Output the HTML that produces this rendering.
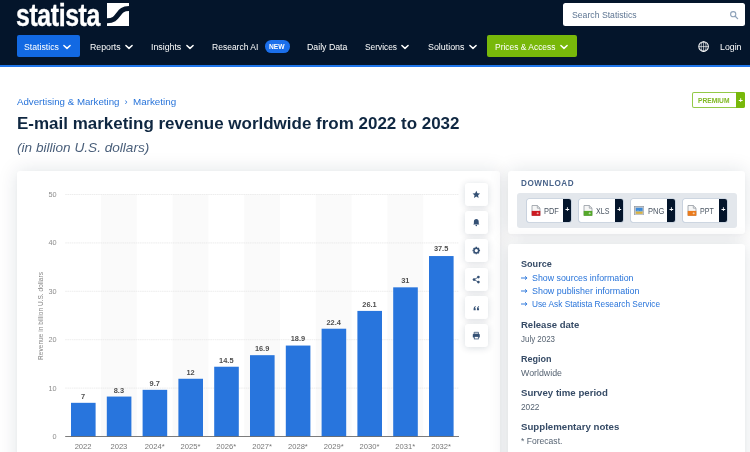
<!DOCTYPE html><html lang="en"><head><meta charset="utf-8"><title>E-mail marketing revenue worldwide 2022-2032 | Statista</title>
<style>html,body{margin:0;padding:0}body{width:750px;height:452px;overflow:hidden;position:relative;background:#fff;font-family:"Liberation Sans", sans-serif;-webkit-font-smoothing:antialiased}
.t{position:absolute;display:block;white-space:nowrap;line-height:20px;margin:0;padding:0;font-weight:400;font-style:normal;text-decoration:none}.a{position:absolute}.card{position:absolute;background:#fff;border-radius:3px;box-shadow:0 0 20px rgba(15,39,65,.125),0 1px 4px rgba(15,39,65,.03)}.tb{position:absolute;left:465.4px;width:23px;height:23px;background:#fff;border-radius:3px;box-shadow:0 1px 7px rgba(15,39,65,.16)}.tb svg{position:absolute;left:0;top:0}.db{position:absolute;top:199.3px;width:44.2px;height:22.4px;background:#fff;border-radius:2px;overflow:hidden;box-shadow:0 0 0 .6px #b7c5d6}.db i{position:absolute;right:0;top:0;bottom:0;width:8px;background:#04152b}</style></head><body>
<div class="a" style="left:0;top:0;width:750px;height:452px;overflow:hidden;will-change:transform">
<div class="a" style="left:0;top:0;width:750px;height:65px;background:#04152b"></div>
<div class="a" style="left:0;top:64.8px;width:750px;height:2.7px;background:#2076ea"></div>
<div class="t" id="logo" style="left:15.6px;top:3.8px;font-size:31.3px;line-height:24px;font-weight:700;color:#fff;-webkit-text-stroke:.35px #fff;transform-origin:0 50%;transform:scaleX(.795);letter-spacing:-.5px">statista</div>
<svg class="a" style="left:107px;top:3px;width:22.4px;height:23px" viewBox="0 0 22.4 23"><rect width="22.4" height="23" fill="#fff"/><path d="M-.5 17.7 C7 17.7 8.6 15.1 11.2 11.6 C13.8 8.1 15.4 5.5 23 5.5" fill="none" stroke="#04152b" stroke-width="5"/></svg>

<div class="a" style="left:16.5px;top:35.4px;width:63.3px;height:21.7px;border-radius:2px;background:#1269e3"></div>
<div class="a" style="left:487px;top:35.2px;width:89.6px;height:21.9px;border-radius:2px;background:#78b80a"></div>
<div class="a" style="left:264.7px;top:40.2px;width:24.9px;height:12.5px;border-radius:6.3px;background:#1b6feb"></div>
<svg class="a" style="left:62.3px;top:43px;width:10px;height:8px" viewBox="0 0 10 8"><path d="M1.9 2.5 L5 5.4 L8.1 2.5" fill="none" stroke="#fff" stroke-width="1.5" stroke-linecap="round" stroke-linejoin="round"/></svg>
<svg class="a" style="left:124.2px;top:43px;width:10px;height:8px" viewBox="0 0 10 8"><path d="M1.9 2.5 L5 5.4 L8.1 2.5" fill="none" stroke="#fff" stroke-width="1.5" stroke-linecap="round" stroke-linejoin="round"/></svg>
<svg class="a" style="left:185.0px;top:43px;width:10px;height:8px" viewBox="0 0 10 8"><path d="M1.9 2.5 L5 5.4 L8.1 2.5" fill="none" stroke="#fff" stroke-width="1.5" stroke-linecap="round" stroke-linejoin="round"/></svg>
<svg class="a" style="left:400.0px;top:43px;width:10px;height:8px" viewBox="0 0 10 8"><path d="M1.9 2.5 L5 5.4 L8.1 2.5" fill="none" stroke="#fff" stroke-width="1.5" stroke-linecap="round" stroke-linejoin="round"/></svg>
<svg class="a" style="left:467.5px;top:43px;width:10px;height:8px" viewBox="0 0 10 8"><path d="M1.9 2.5 L5 5.4 L8.1 2.5" fill="none" stroke="#fff" stroke-width="1.5" stroke-linecap="round" stroke-linejoin="round"/></svg>
<svg class="a" style="left:559.0px;top:43px;width:10px;height:8px" viewBox="0 0 10 8"><path d="M1.9 2.5 L5 5.4 L8.1 2.5" fill="none" stroke="#fff" stroke-width="1.5" stroke-linecap="round" stroke-linejoin="round"/></svg>
<div class="a" style="left:562.9px;top:2.7px;width:182.6px;height:23.8px;border-radius:2.5px;background:#fff"></div>
<svg class="a" style="left:729px;top:9.5px;width:10px;height:10px" viewBox="0 0 10 10"><circle cx="4.2" cy="4.2" r="2.6" fill="none" stroke="#8ea2b9" stroke-width="1.1"/><path d="M6.2 6.2 L8.6 8.6" stroke="#8ea2b9" stroke-width="1.3" stroke-linecap="round"/></svg>
<svg class="a" style="left:697.9px;top:40.8px;width:11.2px;height:11.2px" viewBox="0 0 11 11"><g fill="none" stroke="#fff"><circle cx="5.5" cy="5.5" r="4.700" stroke-width="1.05"/><ellipse cx="5.5" cy="5.5" rx="2.400" ry="4.700" stroke-width=".65"/><path d="M.8 5.500H10.200M5.500 .8V10.200" stroke-width=".65"/></g></svg>
<div class="a" style="left:692.2px;top:92.4px;width:53.2px;height:15.5px;border-radius:2px;background:#fff;box-shadow:inset 0 0 0 1px #93c947"></div>
<div class="a" style="left:736.2px;top:92.4px;width:9.2px;height:15.5px;border-radius:0 2px 2px 0;background:#78b80a"></div>
<div class="t" style="left:738.4px;top:90.9px;font-size:7.5px;font-weight:700;color:#fff">+</div>
<div class="card" style="left:16.5px;top:170.6px;width:483.4px;height:300px"></div>
<div class="card" style="left:508.3px;top:170.6px;width:236.7px;height:63.4px"></div>
<div class="card" style="left:508.3px;top:244px;width:236.7px;height:230px"></div>
<div class="a" style="left:517.3px;top:192.7px;width:219.4px;height:35.3px;border-radius:3px;background:#e3e7ec"></div>
<div class="db" style="left:526.7px"><i></i></div>
<div class="t" style="left:565.2px;top:199.6px;font-size:7.2px;font-weight:700;color:#fff">+</div>
<svg class="a" style="left:530.5px;top:205px;width:10px;height:11px" viewBox="0 0 10 11"><path d="M1 .5H6.300L9 3.200V10.500H1Z" fill="#f6f6f6" stroke="#8f969e" stroke-width=".75"/><path d="M6.300 .5V3.200H9" fill="none" stroke="#8f969e" stroke-width=".7"/><rect x=".7" y="5.900" width="8.600" height="4.900" fill="#cc1a21"/><path d="M5.600 8.300h2.200M6.700 7.300v2" stroke="#fff" stroke-width=".6" opacity=".85"/></svg>
<div class="db" style="left:578.7px"><i></i></div>
<div class="t" style="left:617.2px;top:199.6px;font-size:7.2px;font-weight:700;color:#fff">+</div>
<svg class="a" style="left:582.5px;top:205px;width:10px;height:11px" viewBox="0 0 10 11"><path d="M1 .5H6.300L9 3.200V10.500H1Z" fill="#f6f6f6" stroke="#8f969e" stroke-width=".75"/><path d="M6.300 .5V3.200H9" fill="none" stroke="#8f969e" stroke-width=".7"/><rect x=".7" y="5.900" width="8.600" height="4.900" fill="#55a82a"/><path d="M5.600 8.300h2.200M6.700 7.300v2" stroke="#fff" stroke-width=".6" opacity=".85"/></svg>
<div class="db" style="left:630.7px"><i></i></div>
<div class="t" style="left:669.2px;top:199.6px;font-size:7.2px;font-weight:700;color:#fff">+</div>
<svg class="a" style="left:634.1px;top:205.6px;width:10.4px;height:9.6px" viewBox="0 0 10.4 9.6"><rect x=".4" y=".4" width="9.600" height="8.800" fill="#c9cdd2" stroke="#8f969e" stroke-width=".7"/><rect x="1.800" y="1.800" width="6.800" height="3.400" fill="#3f8bd8"/><rect x="1.800" y="5.200" width="6.800" height="2.600" fill="#d9b13f"/><path d="M1.800 5.600 L4 4.200 L5.600 5.200 L7 4.600 L8.600 5.600Z" fill="#7fb6e8"/></svg>
<div class="db" style="left:682.7px"><i></i></div>
<div class="t" style="left:721.2px;top:199.6px;font-size:7.2px;font-weight:700;color:#fff">+</div>
<svg class="a" style="left:686.5px;top:205px;width:10px;height:11px" viewBox="0 0 10 11"><path d="M1 .5H6.300L9 3.200V10.500H1Z" fill="#f6f6f6" stroke="#8f969e" stroke-width=".75"/><path d="M6.300 .5V3.200H9" fill="none" stroke="#8f969e" stroke-width=".7"/><rect x=".7" y="5.900" width="8.600" height="4.900" fill="#ea7b1c"/><path d="M5.600 8.300h2.200M6.700 7.300v2" stroke="#fff" stroke-width=".6" opacity=".85"/></svg>
<svg class="a" style="left:520.6px;top:274.5px;width:7px;height:6px" viewBox="0 0 7 6"><path d="M.4 3H5.700M4.300 1.600L5.900 3L4.300 4.400" fill="none" stroke="#2874da" stroke-width=".95" stroke-linecap="round" stroke-linejoin="round"/></svg>
<svg class="a" style="left:520.6px;top:287.8px;width:7px;height:6px" viewBox="0 0 7 6"><path d="M.4 3H5.700M4.300 1.600L5.900 3L4.300 4.400" fill="none" stroke="#2874da" stroke-width=".95" stroke-linecap="round" stroke-linejoin="round"/></svg>
<svg class="a" style="left:520.6px;top:301.2px;width:7px;height:6px" viewBox="0 0 7 6"><path d="M.4 3H5.700M4.300 1.600L5.900 3L4.300 4.400" fill="none" stroke="#2874da" stroke-width=".95" stroke-linecap="round" stroke-linejoin="round"/></svg>
<svg class="a" style="left:0;top:170px;width:500px;height:282px" viewBox="0 170 500 282">
<rect x="101.00" y="194.5" width="35.80" height="242.00" fill="#fafafa"/>
<rect x="172.60" y="194.5" width="35.80" height="242.00" fill="#fafafa"/>
<rect x="244.20" y="194.5" width="35.80" height="242.00" fill="#fafafa"/>
<rect x="315.80" y="194.5" width="35.80" height="242.00" fill="#fafafa"/>
<rect x="387.40" y="194.5" width="35.80" height="242.00" fill="#fafafa"/>
<path d="M65.2 194.50H459.0" stroke="#e8e8e8" stroke-width=".8" stroke-dasharray="1.6 .6"/>
<path d="M65.2 242.90H459.0" stroke="#e8e8e8" stroke-width=".8" stroke-dasharray="1.6 .6"/>
<path d="M65.2 291.30H459.0" stroke="#e8e8e8" stroke-width=".8" stroke-dasharray="1.6 .6"/>
<path d="M65.2 339.70H459.0" stroke="#e8e8e8" stroke-width=".8" stroke-dasharray="1.6 .6"/>
<path d="M65.2 388.10H459.0" stroke="#e8e8e8" stroke-width=".8" stroke-dasharray="1.6 .6"/>
<rect x="71.00" y="402.82" width="24.6" height="33.68" fill="#2875dd"/>
<rect x="106.80" y="396.56" width="24.6" height="39.94" fill="#2875dd"/>
<rect x="142.60" y="389.82" width="24.6" height="46.68" fill="#2875dd"/>
<rect x="178.40" y="378.76" width="24.6" height="57.74" fill="#2875dd"/>
<rect x="214.20" y="366.73" width="24.6" height="69.77" fill="#2875dd"/>
<rect x="250.00" y="355.18" width="24.6" height="81.32" fill="#2875dd"/>
<rect x="285.80" y="345.55" width="24.6" height="90.95" fill="#2875dd"/>
<rect x="321.60" y="328.71" width="24.6" height="107.79" fill="#2875dd"/>
<rect x="357.40" y="310.91" width="24.6" height="125.59" fill="#2875dd"/>
<rect x="393.20" y="287.33" width="24.6" height="149.17" fill="#2875dd"/>
<rect x="429.00" y="256.05" width="24.6" height="180.45" fill="#2875dd"/>
<path d="M65.2 436.50H459.0" stroke="#5a5a5a" stroke-width=".8"/>
</svg>
<div class="t" id="ylab" style="left:40.7px;top:315.9px;font-size:6.55px;color:#858585;transform:translate(-50%,-50%) rotate(-90deg);letter-spacing:.02px">Revenue in billion U.S. dollars</div>
<div class="tb" style="top:182.8px"><svg width="23" height="23" viewBox="0 0 23 23"><g transform="translate(11.3 11.6) scale(.78) translate(-11.5 -11.5)"><path d='M11.5 6.6l1.45 3.1 3.35.4-2.5 2.3.65 3.3-2.95-1.65-2.95 1.65.65-3.3-2.5-2.3 3.35-.4z' fill='#345074'/></g></svg></div>
<div class="tb" style="top:211.1px"><svg width="23" height="23" viewBox="0 0 23 23"><g transform="translate(11.3 11.6) scale(.78) translate(-11.5 -11.5)"><path d='M11.5 6.900c-1.900 0-3.100 1.400-3.100 3.400v2.400l-.8 1.200h7.800l-.8-1.200v-2.400c0-2-1.200-3.400-3.100-3.400z' fill='#345074'/><circle cx='11.500' cy='15.200' r='1' fill='#345074'/></g></svg></div>
<div class="tb" style="top:239.4px"><svg width="23" height="23" viewBox="0 0 23 23"><g transform="translate(11.3 11.6) scale(.78) translate(-11.5 -11.5)"><circle cx='11.5' cy='11.5' r='3.05' fill='none' stroke='#345074' stroke-width='1.9'/><g stroke='#345074' stroke-width='1.9'><path d='M11.5 6.7v1.4M11.5 14.9v1.4M6.7 11.5h1.400M14.900 11.500h1.400M8.100 8.100l1 1M13.900 13.900l1 1M14.900 8.100l-1 1M9.100 13.900l-1 1'/></g></g></svg></div>
<div class="tb" style="top:267.7px"><svg width="23" height="23" viewBox="0 0 23 23"><g transform="translate(11.3 11.6) scale(.78) translate(-11.5 -11.5)"><g fill='#345074'><circle cx='8.600' cy='11.500' r='1.700'/><circle cx='14.2' cy='8.3' r='1.700'/><circle cx='14.2' cy='14.7' r='1.700'/></g><path d='M14.2 8.3L8.6 11.5l5.600 3.200' fill='none' stroke='#345074' stroke-width='1'/></g></svg></div>
<div class="tb" style="top:296.0px"><svg width="23" height="23" viewBox="0 0 23 23"><g transform="translate(11.3 11.6) scale(.78) translate(-11.5 -11.5)"><path d='M8 13.800c0-2.300.9-3.700 2.700-4.300v1.300c-.7.300-1.100.9-1.100 1.500h1.100v2.700H8zM12.300 13.800c0-2.300.9-3.700 2.700-4.300v1.300c-.7.300-1.100.9-1.100 1.500H15v2.700h-2.700z' fill='#345074'/></g></svg></div>
<div class="tb" style="top:324.3px"><svg width="23" height="23" viewBox="0 0 23 23"><g transform="translate(11.3 11.6) scale(.78) translate(-11.5 -11.5)"><path d='M8.700 7.300h5.600v2.200H8.700z' fill='none' stroke='#345074' stroke-width='1'/><rect x='7' y='9.600' width='9' height='4.400' rx='.8' fill='#345074'/><rect x='8.900' y='12.600' width='5.200' height='3.200' fill='#fff' stroke='#345074' stroke-width='1'/></g></svg></div>
<a class="t" id="n1" style="top:36.84px;font-size:9.70px;color:#fff;left:23.90px;transform-origin:0 13.36px;transform:scale(0.9003,1.000);">Statistics</a>
<a class="t" id="n2" style="top:36.84px;font-size:9.70px;color:#fff;left:89.50px;transform-origin:0 13.36px;transform:scale(0.9021,1.000);">Reports</a>
<a class="t" id="n3" style="top:36.84px;font-size:9.70px;color:#fff;left:150.80px;transform-origin:0 13.36px;transform:scale(0.9044,1.000);">Insights</a>
<a class="t" id="n4" style="top:36.84px;font-size:9.70px;color:#fff;left:212.00px;transform-origin:0 13.36px;transform:scale(0.8791,1.000);">Research AI</a>
<span class="t" id="n5" style="top:37.08px;font-size:6.70px;color:#fff;font-weight:700;left:269.40px;transform-origin:0 12.32px;transform:scale(0.9994,1.000);">NEW</span>
<a class="t" id="n6" style="top:36.84px;font-size:9.70px;color:#fff;left:306.80px;transform-origin:0 13.36px;transform:scale(0.9041,1.000);">Daily Data</a>
<a class="t" id="n7" style="top:36.84px;font-size:9.70px;color:#fff;left:364.80px;transform-origin:0 13.36px;transform:scale(0.8612,1.000);">Services</a>
<a class="t" id="n8" style="top:36.84px;font-size:9.70px;color:#fff;left:427.50px;transform-origin:0 13.36px;transform:scale(0.9157,1.000);">Solutions</a>
<a class="t" id="n9" style="top:36.84px;font-size:9.70px;color:#fff;left:495.00px;transform-origin:0 13.36px;transform:scale(0.8711,1.000);">Prices &amp; Access</a>
<a class="t" id="n10" style="top:36.84px;font-size:9.70px;color:#fff;left:720.00px;transform-origin:0 13.36px;transform:scale(0.9065,1.000);">Login</a>
<label class="t" id="srch" style="top:4.68px;font-size:9.30px;color:#5d7592;left:572.40px;transform-origin:0 13.22px;transform:scale(0.9329,1.000);">Search Statistics</label>
<span class="t" id="prem" style="top:90.78px;font-size:6.40px;color:#80b924;font-weight:700;left:697.50px;transform-origin:0 12.22px;transform:scale(1.0435,1.000);">PREMIUM</span>
<a class="t" id="bc1" style="top:92.02px;font-size:9.75px;color:#2874da;left:17.00px;transform-origin:0 13.38px;transform:scale(0.9954,1.000);">Advertising &amp; Marketing</a>
<span class="t" id="bc2" style="top:92.21px;font-size:9.20px;color:#2874da;left:124.50px;">›</span>
<a class="t" id="bc3" style="top:92.02px;font-size:9.75px;color:#2874da;left:132.60px;transform-origin:0 13.38px;transform:scale(1.0091,1.000);">Marketing</a>
<h1 class="t" id="title" style="top:113.18px;font-size:16.50px;color:#0f2741;font-weight:700;left:17.00px;transform-origin:0 15.72px;transform:scale(1.0289,1.000);">E-mail marketing revenue worldwide from 2022 to 2032</h1>
<h2 class="t" id="sub" style="top:137.83px;font-size:13.20px;color:#4a5f7a;font-style:italic;left:16.90px;transform-origin:0 14.57px;transform:scale(1.0315,1.000);">(in billion U.S. dollars)</h2>
<h3 class="t" id="dl" style="top:173.19px;font-size:8.40px;color:#48638a;font-weight:700;left:520.70px;transform-origin:0 12.91px;transform:scale(0.9734,1.000);letter-spacing:.55px;">DOWNLOAD</h3>
<span class="t" id="d0" style="top:200.78px;font-size:9.30px;color:#4a5562;left:544.10px;transform-origin:0 13.22px;transform:scale(0.8007,1.000);">PDF</span>
<span class="t" id="d1" style="top:200.78px;font-size:9.30px;color:#4a5562;left:596.10px;transform-origin:0 13.22px;transform:scale(0.7623,1.000);">XLS</span>
<span class="t" id="d2" style="top:200.78px;font-size:9.30px;color:#4a5562;left:648.10px;transform-origin:0 13.22px;transform:scale(0.8136,1.000);">PNG</span>
<span class="t" id="d3" style="top:200.78px;font-size:9.30px;color:#4a5562;left:700.10px;transform-origin:0 13.22px;transform:scale(0.7627,1.000);">PPT</span>
<h4 class="t" id="s0" style="top:253.77px;font-size:9.60px;color:#364b66;font-weight:700;left:520.70px;transform-origin:0 13.33px;transform:scale(0.9468,1.000);">Source</h4>
<a class="t" id="s1" style="top:267.88px;font-size:9.00px;color:#2874da;left:532.00px;transform-origin:0 13.12px;transform:scale(0.9801,1.000);">Show sources information</a>
<a class="t" id="s2" style="top:280.68px;font-size:9.00px;color:#2874da;left:532.00px;transform-origin:0 13.12px;transform:scale(0.9902,1.000);">Show publisher information</a>
<a class="t" id="s3" style="top:293.98px;font-size:9.00px;color:#2874da;left:532.00px;transform-origin:0 13.12px;transform:scale(0.9204,1.000);">Use Ask Statista Research Service</a>
<h4 class="t" id="h0" style="top:314.57px;font-size:9.60px;color:#364b66;font-weight:700;left:520.70px;transform-origin:0 13.33px;transform:scale(0.9920,1.000);">Release date</h4>
<p class="t" id="v0" style="top:328.58px;font-size:9.00px;color:#566372;left:520.70px;transform-origin:0 13.12px;transform:scale(0.8824,1.000);">July 2023</p>
<h4 class="t" id="h1" style="top:348.67px;font-size:9.60px;color:#364b66;font-weight:700;left:520.70px;transform-origin:0 13.33px;transform:scale(0.9411,1.000);">Region</h4>
<p class="t" id="v1" style="top:362.68px;font-size:9.00px;color:#566372;left:520.70px;transform-origin:0 13.12px;transform:scale(0.9795,1.000);">Worldwide</p>
<h4 class="t" id="h2" style="top:382.77px;font-size:9.60px;color:#364b66;font-weight:700;left:520.70px;transform-origin:0 13.33px;transform:scale(1.0061,1.000);">Survey time period</h4>
<p class="t" id="v2" style="top:396.78px;font-size:9.00px;color:#566372;left:520.70px;transform-origin:0 13.12px;transform:scale(0.9236,1.000);">2022</p>
<h4 class="t" id="h3" style="top:416.87px;font-size:9.60px;color:#364b66;font-weight:700;left:520.70px;transform-origin:0 13.33px;transform:scale(1.0076,1.000);">Supplementary notes</h4>
<p class="t" id="v3" style="top:430.88px;font-size:9.00px;color:#566372;left:520.70px;transform-origin:0 13.12px;transform:scale(0.9514,1.000);">* Forecast.</p>
<span class="t" id="y0" style="top:185.07px;font-size:7.30px;color:#8c8c8c;right:693.40px;">50</span>
<span class="t" id="y1" style="top:233.47px;font-size:7.30px;color:#8c8c8c;right:693.40px;">40</span>
<span class="t" id="y2" style="top:281.87px;font-size:7.30px;color:#8c8c8c;right:693.40px;">30</span>
<span class="t" id="y3" style="top:330.27px;font-size:7.30px;color:#8c8c8c;right:693.40px;">20</span>
<span class="t" id="y4" style="top:378.67px;font-size:7.30px;color:#8c8c8c;right:693.40px;">10</span>
<span class="t" id="y5" style="top:427.07px;font-size:7.30px;color:#8c8c8c;right:693.40px;">0</span>
<span class="t" id="bv0" style="top:387.06px;font-size:7.40px;color:#4f4f4f;font-weight:700;left:83.10px;transform:translateX(-50%);">7</span>
<span class="t" id="bx0" style="top:437.07px;font-size:7.60px;color:#777;left:83.10px;transform:translateX(-50%);">2022</span>
<span class="t" id="bv1" style="top:380.76px;font-size:7.40px;color:#4f4f4f;font-weight:700;left:118.90px;transform:translateX(-50%);">8.3</span>
<span class="t" id="bx1" style="top:437.07px;font-size:7.60px;color:#777;left:118.90px;transform:translateX(-50%);">2023</span>
<span class="t" id="bv2" style="top:373.99px;font-size:7.40px;color:#4f4f4f;font-weight:700;left:154.70px;transform:translateX(-50%);">9.7</span>
<span class="t" id="bx2" style="top:437.07px;font-size:7.60px;color:#777;left:154.70px;transform:translateX(-50%);">2024*</span>
<span class="t" id="bv3" style="top:362.86px;font-size:7.40px;color:#4f4f4f;font-weight:700;left:190.50px;transform:translateX(-50%);">12</span>
<span class="t" id="bx3" style="top:437.07px;font-size:7.60px;color:#777;left:190.50px;transform:translateX(-50%);">2025*</span>
<span class="t" id="bv4" style="top:350.76px;font-size:7.40px;color:#4f4f4f;font-weight:700;left:226.30px;transform:translateX(-50%);">14.5</span>
<span class="t" id="bx4" style="top:437.07px;font-size:7.60px;color:#777;left:226.30px;transform:translateX(-50%);">2026*</span>
<span class="t" id="bv5" style="top:339.14px;font-size:7.40px;color:#4f4f4f;font-weight:700;left:262.10px;transform:translateX(-50%);">16.9</span>
<span class="t" id="bx5" style="top:437.07px;font-size:7.60px;color:#777;left:262.10px;transform:translateX(-50%);">2027*</span>
<span class="t" id="bv6" style="top:329.46px;font-size:7.40px;color:#4f4f4f;font-weight:700;left:297.90px;transform:translateX(-50%);">18.9</span>
<span class="t" id="bx6" style="top:437.07px;font-size:7.60px;color:#777;left:297.90px;transform:translateX(-50%);">2028*</span>
<span class="t" id="bv7" style="top:312.52px;font-size:7.40px;color:#4f4f4f;font-weight:700;left:333.70px;transform:translateX(-50%);">22.4</span>
<span class="t" id="bx7" style="top:437.07px;font-size:7.60px;color:#777;left:333.70px;transform:translateX(-50%);">2029*</span>
<span class="t" id="bv8" style="top:294.61px;font-size:7.40px;color:#4f4f4f;font-weight:700;left:369.50px;transform:translateX(-50%);">26.1</span>
<span class="t" id="bx8" style="top:437.07px;font-size:7.60px;color:#777;left:369.50px;transform:translateX(-50%);">2030*</span>
<span class="t" id="bv9" style="top:270.90px;font-size:7.40px;color:#4f4f4f;font-weight:700;left:405.30px;transform:translateX(-50%);">31</span>
<span class="t" id="bx9" style="top:437.07px;font-size:7.60px;color:#777;left:405.30px;transform:translateX(-50%);">2031*</span>
<span class="t" id="bv10" style="top:239.44px;font-size:7.40px;color:#4f4f4f;font-weight:700;left:441.10px;transform:translateX(-50%);">37.5</span>
<span class="t" id="bx10" style="top:437.07px;font-size:7.60px;color:#777;left:441.10px;transform:translateX(-50%);">2032*</span>
</div>
</body></html>
